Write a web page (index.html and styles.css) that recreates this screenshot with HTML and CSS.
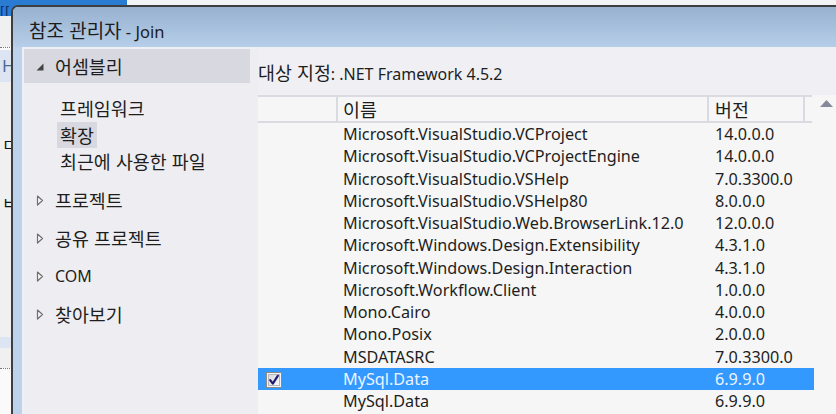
FILE: index.html
```html
<!DOCTYPE html>
<html lang="ko">
<head>
<meta charset="utf-8">
<title>참조 관리자 - Join</title>
<link rel="stylesheet" href="styles.css">
</head>
<body>
<div class="desk">
  <div class="desk-bar"><span class="desk-bar-text">[[</span></div>
  <div class="desk-gap"></div>
  <div class="desk-dots"></div>
  <div class="desk-sel">H</div>
  <div class="desk-plain">
    <span class="desk-frag frag-a">ㅁ</span>
    <span class="desk-frag frag-b">ㅂ</span>
  </div>
  <div class="desk-band"></div>
  <div class="desk-gap2"></div>
  <div class="desk-dots"></div>
  <div class="desk-rest"></div>
</div>

<div class="dialog">
  <div class="titlebar"><span class="ko">참조 관리자</span> - Join</div>
  <div class="client">
    <div class="side">
      <div class="side-head">
        <svg class="tri-open" width="8" height="8" viewBox="0 0 8 8"><path d="M7.5 0.5 L7.5 7.5 L0.5 7.5 Z" fill="#444"/></svg>
        <span class="ko">어셈블리</span>
      </div>
      <div class="children">
        <div class="child"><span class="child-label ko">프레임워크</span></div>
        <div class="child"><span class="child-label ko is-active">확장</span></div>
        <div class="child"><span class="child-label ko">최근에 사용한 파일</span></div>
      </div>
      <div class="tree">
        <div class="node"><svg class="tri-closed" width="8" height="11" viewBox="0 0 8 11"><path d="M1.5 1 L6.5 5.5 L1.5 10 Z" fill="#f4f4f6" stroke="#707070" stroke-width="1.2" stroke-linejoin="round"/></svg><span class="ko">프로젝트</span></div>
        <div class="node"><svg class="tri-closed" width="8" height="11" viewBox="0 0 8 11"><path d="M1.5 1 L6.5 5.5 L1.5 10 Z" fill="#f4f4f6" stroke="#707070" stroke-width="1.2" stroke-linejoin="round"/></svg><span class="ko">공유 프로젝트</span></div>
        <div class="node"><svg class="tri-closed" width="8" height="11" viewBox="0 0 8 11"><path d="M1.5 1 L6.5 5.5 L1.5 10 Z" fill="#f4f4f6" stroke="#707070" stroke-width="1.2" stroke-linejoin="round"/></svg><span>COM</span></div>
        <div class="node"><svg class="tri-closed" width="8" height="11" viewBox="0 0 8 11"><path d="M1.5 1 L6.5 5.5 L1.5 10 Z" fill="#f4f4f6" stroke="#707070" stroke-width="1.2" stroke-linejoin="round"/></svg><span class="ko">찾아보기</span></div>
      </div>
    </div>
    <div class="main">
      <div class="target"><span class="ko">대상 지정</span>: .NET Framework 4.5.2</div>
      <div class="list">
        <div class="table">
          <div class="thead">
            <div class="th"></div>
            <div class="th th-name"><span class="ko">이름</span></div>
            <div class="th th-ver"><span class="ko">버전</span></div>
            <div class="th th-end"></div>
          </div>
          <div class="row"><div class="c-chk"></div><div class="c-name">Microsoft.VisualStudio.VCProject</div><div class="c-ver">14.0.0.0</div></div>
          <div class="row"><div class="c-chk"></div><div class="c-name">Microsoft.VisualStudio.VCProjectEngine</div><div class="c-ver">14.0.0.0</div></div>
          <div class="row"><div class="c-chk"></div><div class="c-name">Microsoft.VisualStudio.VSHelp</div><div class="c-ver">7.0.3300.0</div></div>
          <div class="row"><div class="c-chk"></div><div class="c-name">Microsoft.VisualStudio.VSHelp80</div><div class="c-ver">8.0.0.0</div></div>
          <div class="row"><div class="c-chk"></div><div class="c-name">Microsoft.VisualStudio.Web.BrowserLink.12.0</div><div class="c-ver">12.0.0.0</div></div>
          <div class="row"><div class="c-chk"></div><div class="c-name">Microsoft.Windows.Design.Extensibility</div><div class="c-ver">4.3.1.0</div></div>
          <div class="row"><div class="c-chk"></div><div class="c-name">Microsoft.Windows.Design.Interaction</div><div class="c-ver">4.3.1.0</div></div>
          <div class="row"><div class="c-chk"></div><div class="c-name">Microsoft.Workflow.Client</div><div class="c-ver">1.0.0.0</div></div>
          <div class="row"><div class="c-chk"></div><div class="c-name">Mono.Cairo</div><div class="c-ver">4.0.0.0</div></div>
          <div class="row"><div class="c-chk"></div><div class="c-name">Mono.Posix</div><div class="c-ver">2.0.0.0</div></div>
          <div class="row"><div class="c-chk"></div><div class="c-name">MSDATASRC</div><div class="c-ver">7.0.3300.0</div></div>
          <div class="row is-selected"><div class="c-chk">
            <svg class="checkbox" width="16" height="16" viewBox="0 0 16 16">
              <defs><linearGradient id="cbg" x1="0" y1="0" x2="1" y2="1"><stop offset="0" stop-color="#d9d9dc"/><stop offset="1" stop-color="#fbfbfb"/></linearGradient></defs>
              <rect x="0.5" y="0.5" width="15" height="15" fill="#f4f4f4" stroke="#8a8a8a"/>
              <rect x="2.5" y="2.5" width="11" height="11" fill="url(#cbg)" stroke="#b8b8bc"/>
              <path d="M4.2 8.2 L6.8 11.6 L11.8 3.8" fill="none" stroke="#1d1d72" stroke-width="2.2" stroke-linecap="round" stroke-linejoin="round"/>
            </svg>
          </div><div class="c-name">MySql.Data</div><div class="c-ver">6.9.9.0</div></div>
          <div class="row"><div class="c-chk"></div><div class="c-name">MySql.Data</div><div class="c-ver">6.9.9.0</div></div>
        </div>
        <div class="scroll">
          <svg class="scroll-up" width="13" height="7" viewBox="0 0 13 7"><path d="M6.5 0 L13 7 L0 7 Z" fill="#868999"/></svg>
        </div>
      </div>
    </div>
  </div>
</div>
</body>
</html>
```

FILE: styles.css
```css
* { box-sizing: border-box; }

html, body { margin: 0; padding: 0; }

body {
  width: 836px;
  height: 414px;
  overflow: hidden;
  position: relative;
  background: #f3f3f6;
  font-family: "Noto Sans", "Noto Sans CJK KR", sans-serif;
  color: #1e1e1e;
}

/* Hangul runs: the original UI font draws them larger than the Latin text */
.ko {
  font-family: "Noto Sans CJK KR", sans-serif;
  font-size: 1.15em;
  font-weight: 400;
}

/* ---------- backdrop window (left strip) ---------- */
.desk {
  display: flex;
  flex-direction: column;
  height: 414px;
}

.desk-bar {
  height: 16px;
  width: 127px;
  background: #2a7bd2;
}

.desk-bar-text {
  display: block;
  padding: 6px 0 0 0;
  font-size: 13px;
  line-height: 12px;
  color: #0c2c6a;
  font-family: "DejaVu Sans", sans-serif;
}

.desk-gap {
  height: 31px;
  background: #f0f0f0;
}

.desk-dots {
  height: 3px;
  border-top: 1px dotted #7a7a7a;
  background: #fafafa;
}

.desk-sel {
  height: 32px;
  background: #dce5f1;
  font-size: 17px;
  line-height: 32px;
  padding-left: 2px;
  color: #4d6b93;
}

.desk-plain {
  height: 255px;
  background: #f0f0f0;
  position: relative;
}

.desk-frag {
  position: absolute;
  left: 2px;
  font-size: 16px;
  line-height: 16px;
  color: #111;
  font-family: "Noto Sans CJK KR", sans-serif;
}

.frag-a { top: 54px; }
.frag-b { top: 112px; }

.desk-band {
  height: 11px;
  background: #dce5f1;
}

.desk-gap2 {
  height: 20px;
  background: #f0f0f0;
}

.desk-rest {
  flex: 1;
  background: #fafafa;
}

/* ---------- dialog ---------- */
.dialog {
  position: absolute;
  left: 11px;
  top: 5px;
  width: 840px;
  height: 420px;
  border-top: 2px solid #3e3e3e;
  border-left: 2px solid #3e3e3e;
  border-top-left-radius: 7px;
  background: #bdd2ec;
  overflow: hidden;
  display: flex;
  flex-direction: column;
}

.titlebar {
  height: 40px;
  flex: none;
  background: linear-gradient(#97b1cf, #b6cee9);
  padding: 13px 0 0 16px;
  font-size: 16.5px;
  line-height: 20px;
  color: #1c1c1c;
  white-space: nowrap;
}

.client {
  flex: 1;
  margin-left: 9px;
  background: #f0f0f4;
  display: flex;
  padding: 2px 0 0 2px;
}

/* ---------- left tree ---------- */
.side {
  width: 234px;
  flex: none;
  background: #eeeef2;
  font-size: 16px;
}

.side-head {
  height: 34px;
  margin-right: 8px;
  background: #d8d8e0;
  display: flex;
  align-items: center;
  padding-left: 12px;
  gap: 11px;
  line-height: 20px;
}

.tri-open { flex: none; margin-top: 1px; }

.children {
  margin-top: 12px;
  padding-left: 33px;
}

.child {
  height: 26.5px;
  line-height: 26px;
}

.child-label {
  display: inline-block;
  padding: 0 3px;
  height: 26px;
  white-space: nowrap;
}

.child-label.is-active {
  background: #d8d8e0;
}

.tree {
  margin-top: 6.5px;
}

.node {
  height: 38px;
  display: flex;
  align-items: center;
  padding-left: 12px;
  gap: 11px;
  line-height: 20px;
  white-space: nowrap;
}

.tri-closed { flex: none; }

/* ---------- main area ---------- */
.main {
  flex: 1;
  display: flex;
  flex-direction: column;
  min-width: 0;
}

.target {
  height: 46px;
  flex: none;
  font-size: 16px;
  line-height: 46px;
  white-space: nowrap;
}

.list {
  flex: 1;
  display: flex;
  background: #f6f6f6;
}

.table {
  width: 556px;
  flex: none;
  font-size: 16.2px;
}

.thead {
  width: 554px;
  display: grid;
  grid-template-columns: 80px 371px 96px 7px;
  height: 28px;
  border-top: 2px solid #dadae3;
  border-bottom: 2px solid #dadae3;
}

.th {
  border-right: 2px solid #dadae3;
  line-height: 24px;
  font-size: 16px;
}

.th-name { padding-left: 5px; }
.th-ver { padding-left: 6px; }
.th-end { border-right: none; }

.row {
  display: grid;
  grid-template-columns: 80px 371px 96px 9px;
  height: 22.25px;
  line-height: 22.25px;
  white-space: nowrap;
}

.row.is-selected {
  background: #3399ff;
  color: #eef4ff;
}

.c-chk {
  display: flex;
  align-items: center;
  padding-left: 8px;
}

.c-name { padding-left: 5px; }
.c-ver { padding-left: 6px; }

.checkbox { display: block; margin-top: 2px; }

.scroll {
  flex: 1;
  padding: 5px 0 0 6px;
}

.scroll-up { display: block; }
```
